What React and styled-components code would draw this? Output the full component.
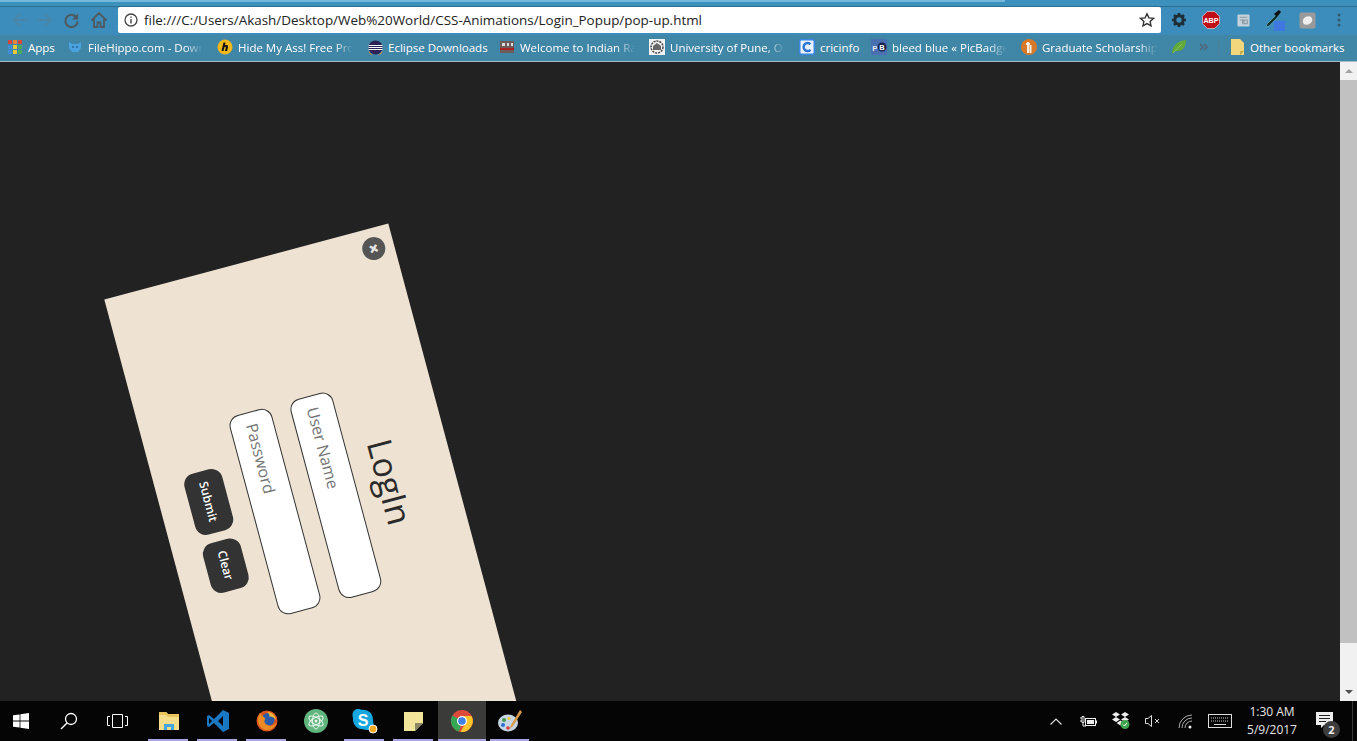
import styled, { createGlobalStyle } from 'styled-components';

const GlobalStyle = createGlobalStyle`
  html, body {
    margin: 0;
    padding: 0;
    height: 100%;
    overflow: hidden;
    font-family: "Open Sans", "Liberation Sans", sans-serif;
  }
  #root { height: 100%; }
`;

const Screen = styled.div`
  height: 100vh;
  display: flex;
  flex-direction: column;
`;

const TabStrip = styled.div`
  height: 7px;
  flex: none;
  box-sizing: border-box;
  background: #3b90bc;
  border-bottom: 1px solid #2c6f90;
  &::before {
    content: '';
    display: block;
    width: 1005px;
    height: 2px;
    background: #74b9dc;
  }
`;

const Toolbar = styled.div`
  height: 28px;
  flex: none;
  display: flex;
  align-items: flex-start;
  background: #3c8dbc;
  padding-left: 8px;
`;

const NavButton = styled.button`
  width: ${(props) => props.$width}px;
  height: 26px;
  flex: none;
  padding: 0;
  border: 0;
  background: none;
  display: flex;
  align-items: center;
  justify-content: center;
`;

const AddressBar = styled.div`
  flex: none;
  width: 1043px;
  height: 26px;
  margin-left: 8px;
  display: flex;
  align-items: center;
  background: #fff;
  border-radius: 2px;
  padding: 0 6px;
  box-sizing: border-box;
`;

const Url = styled.span`
  flex: 1;
  margin-left: 6px;
  font-size: 13.45px;
  color: #222;
  white-space: nowrap;
`;

const Extensions = styled.div`
  display: flex;
  margin-left: 2px;
`;

const ExtensionCell = styled.div`
  width: 32px;
  height: 26px;
  flex: none;
  display: flex;
  align-items: center;
  justify-content: center;
`;

const BookmarksBar = styled.div`
  height: 27px;
  flex: none;
  box-sizing: border-box;
  display: flex;
  align-items: center;
  background: #3f86a7;
  padding: 0 0 2px 7px;
  border-bottom: 1px solid #a7bcc6;
`;

const Bookmark = styled.div`
  width: ${(props) => props.$width}px;
  display: flex;
  align-items: center;
  gap: 5px;
  flex: none;
`;

const BookmarkIcon = styled.span`
  width: 16px;
  height: 16px;
  flex: none;
  display: flex;
  align-items: center;
  justify-content: center;
`;

const BookmarkLabel = styled.span`
  font-size: 11.5px;
  color: #fff;
  white-space: nowrap;
  ${(props) =>
    props.$fade &&
    `width: 115px;
     -webkit-mask-image: linear-gradient(to right, #000 84%, transparent 100%);
     mask-image: linear-gradient(to right, #000 84%, transparent 100%);`}
`;

const MoreIcon = styled.span`
  width: 19px;
  flex: none;
  display: flex;
  align-items: center;
`;

const Separator = styled.span`
  width: 1px;
  height: 16px;
  flex: none;
  background: #4a7f98;
  margin-right: 10px;
`;

const Viewport = styled.div`
  flex: 1;
  min-height: 0;
  display: flex;
`;

const Page = styled.main`
  flex: 1;
  position: relative;
  overflow: hidden;
  background: #222;
`;

const Popup = styled.section`
  position: absolute;
  left: 60.5px;
  top: 294px;
  width: 500px;
  height: 294px;
  padding-top: 43px;
  box-sizing: border-box;
  transform: rotate(75deg);
  background: #eee2d2;
  display: flex;
  flex-direction: column;
  align-items: center;
`;

const CloseButton = styled.button`
  position: absolute;
  left: 9px;
  top: 9px;
  width: 23px;
  height: 23px;
  padding: 0;
  border: 0;
  border-radius: 50%;
  background: #555;
  color: #e4e4e4;
  font: 800 18px/23px "Open Sans", sans-serif;
`;

const Title = styled.h2`
  margin: 0 0 12px;
  height: 44px;
  font-size: 34px;
  line-height: 44px;
  font-weight: 400;
  color: #2a2a2a;
`;

const Field = styled.input`
  width: 206px;
  height: 44px;
  flex: none;
  margin: 0 2px 19px 0;
  padding: 0 11px;
  box-sizing: border-box;
  border: 1px solid #333;
  border-radius: 11px;
  background: #fff;
  outline: none;
  font: 400 16px "Open Sans", sans-serif;
  &::placeholder { color: #757575; opacity: 1; }
`;

const Actions = styled.div`
  display: flex;
  gap: 9px;
  margin: 1px 0 0 4px;
`;

const ActionButton = styled.button`
  width: ${(props) => props.$width}px;
  height: 39px;
  padding: 0;
  border: 0;
  border-radius: 11px;
  background: #333;
  color: #fff;
  font: 600 12px "Open Sans", sans-serif;
`;

const Scrollbar = styled.div`
  width: 17px;
  flex: none;
  display: flex;
  flex-direction: column;
  background: #f1f1f1;
`;

const ScrollArrow = styled.div`
  height: 18px;
  flex: none;
  display: flex;
  align-items: center;
  justify-content: center;
  margin-top: ${(props) => (props.$down ? 'auto' : '0')};
  &::before {
    content: '';
    border-left: 4px solid transparent;
    border-right: 4px solid transparent;
    ${(props) => (props.$down ? 'border-top: 4px solid #505050;' : 'border-bottom: 4px solid #a3a3a3;')}
  }
`;

const ScrollThumb = styled.div`
  height: 563px;
  flex: none;
  background: #c1c1c1;
`;

const Taskbar = styled.footer`
  height: 40px;
  flex: none;
  display: flex;
  align-items: stretch;
  background: #050505;
  color: #fff;
`;

const TaskCell = styled.div`
  width: ${(props) => props.$width || 48}px;
  flex: none;
  box-sizing: border-box;
  padding-right: ${(props) => props.$inset || 0}px;
  display: flex;
  align-items: center;
  justify-content: center;
  background: ${(props) => (props.$active ? '#3b3b39' : 'transparent')};
  position: relative;
  &::after {
    content: '';
    display: ${(props) => (props.$open ? 'block' : 'none')};
    position: absolute;
    bottom: 0;
    left: ${(props) => (props.$active ? 0 : 4)}px;
    right: ${(props) => (props.$active ? 0 : 5)}px;
    height: 2px;
    background: #a9a6e2;
  }
`;

const Tray = styled.div`
  margin-left: auto;
  display: flex;
  align-items: center;
  padding-right: 4px;
`;

const TrayCell = styled.div`
  width: ${(props) => props.$width}px;
  height: 100%;
  flex: none;
  display: flex;
  align-items: center;
  justify-content: center;
`;

const Clock = styled.div`
  width: 66px;
  margin-left: 3px;
  flex: none;
  text-align: center;
  font-size: 12px;
  line-height: 18px;
  color: #e6e6e6;
`;

const Notes = styled.div`
  width: 48px;
  height: 100%;
  flex: none;
  position: relative;
  display: flex;
  align-items: center;
  justify-content: center;
  padding-right: 8px;
  padding-bottom: 2px;
  border-right: 1px solid #3a3a3a;
  box-sizing: border-box;
`;

const NoteBadge = styled.span`
  position: absolute;
  left: 18px;
  top: 20px;
  width: 17px;
  height: 17px;
  border-radius: 50%;
  background: #3d3d3d;
  color: #eee;
  font-size: 11px;
  font-weight: 700;
  line-height: 17px;
  text-align: center;
`;

const Back = ({ flip }) => (
  <svg width="18" height="16" viewBox="0 0 18 16" style={flip ? { transform: 'scaleX(-1)' } : undefined}>
    <path d="M8 2 2 8l6 6M2 8h14" fill="none" stroke="#4a86a8" strokeWidth="2" />
  </svg>
);

const Reload = () => (
  <svg width="17" height="17" viewBox="0 0 18 18">
    <path d="M14.500 6A6.500 6.500 0 1 0 15.500 10" fill="none" stroke="#4f5a60" strokeWidth="2.200" />
    <path d="M16 1.500V8h-6.500z" fill="#4f5a60" />
  </svg>
);

const Home = () => (
  <svg width="18" height="18" viewBox="0 0 18 18">
    <path d="M1.500 9.500 9 2l7.500 7.500M4 8v8h3.500v-4.500h3V16H14V8" fill="none" stroke="#4f5a60" strokeWidth="1.800" />
  </svg>
);

const Info = () => (
  <svg width="14" height="14" viewBox="0 0 14 14">
    <circle cx="7" cy="7" r="6" fill="none" stroke="#444" strokeWidth="1.300" />
    <path d="M6.300 6h1.400v4.500H6.300zM6.300 3.400h1.400v1.400H6.300z" fill="#444" />
  </svg>
);

const Star = () => (
  <svg width="16" height="16" viewBox="0 0 16 16">
    <path d="m8 1.800 1.900 4.100 4.500.5-3.300 3 .9 4.400L8 11.600l-4 2.200.9-4.400-3.300-3 4.500-.5z" fill="none" stroke="#333" strokeWidth="1.400" />
  </svg>
);

const Gear = () => (
  <svg width="16" height="16" viewBox="0 0 16 16">
    <circle cx="8" cy="8" r="4.200" fill="none" stroke="#1f2d36" strokeWidth="3" />
    <path d="M8 1v3M8 12v3M1 8h3M12 8h3M3 3l2 2M11 11l2 2M13 3l-2 2M5 11l-2 2" stroke="#1f2d36" strokeWidth="2.600" />
  </svg>
);

const Abp = () => (
  <svg width="18" height="18" viewBox="0 0 17 17">
    <path d="M5 .5h7L16.500 5v7L12 16.500H5L.5 12V5z" fill="#c00d18" stroke="#e8e8e8" strokeWidth=".6" />
    <text x="8.500" y="11" textAnchor="middle" fontSize="6.800" fontWeight="700" fill="#fff" fontFamily="Liberation Sans">ABP</text>
  </svg>
);

const Reader = () => (
  <svg width="13" height="13" viewBox="0 0 14 14">
    <rect x=".5" y=".5" width="13" height="13" rx="1" fill="#c4d2da" />
    <path d="M3 3.500h8M3 6.500h8v4H7.500v-4M3 6.500h3v4" fill="none" stroke="#87979f" strokeWidth="1.200" />
  </svg>
);

const Dropper = () => (
  <svg width="22" height="24" viewBox="0 0 22 24">
    <rect x="10" y="13" width="11" height="10" fill="#3f78e0" />
    <path d="m2 19 1-3 9-9 2 2-9 9z" fill="#133" stroke="#7cc" strokeWidth=".5" />
    <path d="m10 6 5-4 2 2-4 5z" fill="#111" />
  </svg>
);

const Shot = () => (
  <svg width="17" height="17" viewBox="0 0 17 17">
    <rect width="16" height="16" x=".5" y=".5" rx="2" fill="#9a9a9a" />
    <ellipse cx="8.500" cy="8.500" rx="5" ry="4" fill="#eee" transform="rotate(-30 8.500 8.500)" />
  </svg>
);

const Dots = () => (
  <svg width="4" height="14" viewBox="0 0 4 14">
    <circle cx="2" cy="2" r="1.500" fill="#35596c" />
    <circle cx="2" cy="7" r="1.500" fill="#35596c" />
    <circle cx="2" cy="12" r="1.500" fill="#35596c" />
  </svg>
);

const AppsGrid = () => (
  <svg width="14" height="14" viewBox="0 0 14 14">
    {[0, 1, 2].flatMap((r) =>
      [0, 1, 2].map((c) => (
        <rect
          key={`${r}${c}`}
          x={c * 5}
          y={r * 5}
          width="4"
          height="4"
          fill={[['#d8483a', '#e8833a', '#d8483a'], ['#3f8fd8', '#e8c83a', '#4aa860'], ['#3f8fd8', '#e8c83a', '#4aa860']][r][c]}
        />
      ))
    )}
  </svg>
);

const Hippo = () => (
  <svg width="14" height="12" viewBox="0 0 14 12">
    <path d="M1 1l3 2h6l3-2v6l-3 4H4L1 7z" fill="#4aa3e0" />
    <circle cx="5" cy="6" r="1" fill="#2a6a9a" />
    <circle cx="9" cy="6" r="1" fill="#2a6a9a" />
  </svg>
);

const HideMyAss = () => (
  <svg width="16" height="16" viewBox="0 0 16 16">
    <circle cx="8" cy="8" r="7.500" fill="#f2b91d" />
    <path d="M6.500 3.500h2L8 6.500c1.800-1 3.500-.3 3 1.500l-.9 4H8l.8-3.500c.2-1-1-1-1.500 0L6.500 12h-2z" fill="#111" />
  </svg>
);

const Eclipse = () => (
  <svg width="15" height="15" viewBox="0 0 15 15">
    <circle cx="7.500" cy="7.500" r="7" fill="#2c2255" />
    <path d="M.5 5.500h14M.5 7.500h14M.5 9.500h14" stroke="#fff" strokeWidth="1" />
    <path d="M1 11.500a7 7 0 0 0 13 0" fill="none" stroke="#e88a2a" strokeWidth="1" />
  </svg>
);

const Train = () => (
  <svg width="16" height="14" viewBox="0 0 16 14">
    <rect x="1" y="1" width="14" height="12" fill="#6e5a58" />
    <path d="M3 3h3v3H3zM8 3h2v3H8zM12 3h2v3h-2z" fill="#ddd" />
    <path d="M1 9h14" stroke="#a22" strokeWidth="2" />
  </svg>
);

const Pune = () => (
  <svg width="16" height="16" viewBox="0 0 16 16">
    <rect width="16" height="16" fill="#f2f2f2" />
    <circle cx="8" cy="8" r="6" fill="none" stroke="#444" strokeWidth="1.500" strokeDasharray="2 1" />
    <path d="M4 11V7l4-3 4 3v4z" fill="#666" />
  </svg>
);

const Cricinfo = () => (
  <svg width="16" height="16" viewBox="0 0 16 16">
    <rect width="16" height="16" rx="2" fill="#3a86e8" />
    <rect x="1.500" y="1.500" width="13" height="13" rx="1" fill="#e8f1fc" />
    <path d="M11.500 5.200A4 4 0 1 0 11.500 10.800" fill="none" stroke="#2a74d8" strokeWidth="2.400" />
  </svg>
);

const PicBadge = () => (
  <svg width="16" height="16" viewBox="0 0 16 16">
    <rect width="16" height="16" fill="#4a6fb0" />
    <text x="4" y="11.500" fontSize="8" fontWeight="700" fill="#dfe8f5" fontFamily="Liberation Sans" textAnchor="middle">P</text>
    <circle cx="11" cy="8" r="4.500" fill="#16264e" />
    <text x="11" y="11" fontSize="7.500" fontWeight="700" fill="#fff" fontFamily="Liberation Sans" textAnchor="middle">B</text>
  </svg>
);

const Gift = () => (
  <svg width="16" height="16" viewBox="0 0 16 16">
    <circle cx="8" cy="8" r="8" fill="#d8792a" />
    <path d="M7 3v11M9.500 6v8M5 5h4" stroke="#f6f0e4" strokeWidth="2" />
  </svg>
);

const Leaf = () => (
  <svg width="16" height="16" viewBox="0 0 16 16">
    <path d="M1 15C1 7 6 2 15 1c0 8-4 12-11 11z" fill="#62a83a" />
    <path d="M2 14 11 5" stroke="#8fca60" strokeWidth=".8" />
  </svg>
);

const More = () => (
  <svg width="9" height="8" viewBox="0 0 9 8">
    <path d="m1 1 3 3-3 3M5 1l3 3-3 3" fill="none" stroke="#50697a" strokeWidth="1.700" />
  </svg>
);

const Folder = () => (
  <svg width="13" height="16" viewBox="0 0 13 16">
    <path d="M0 0h9l4 4v12H0z" fill="#f2d77c" />
    <path d="M9 16l4-4H9z" fill="#c8a848" />
  </svg>
);

const WinLogo = () => (
  <svg width="16" height="16" viewBox="0 0 16 16">
    <path d="M0 2.300 6.600 1.400v6.200H0zM7.400 1.300 16 0v7.600H7.400zM0 8.400h6.600v6.200L0 13.700zM7.400 8.400H16V16l-8.600-1.300z" fill="#fff" />
  </svg>
);

const Search = () => (
  <svg width="18" height="18" viewBox="0 0 18 18">
    <circle cx="11" cy="7" r="5.500" fill="none" stroke="#fff" strokeWidth="1.300" />
    <path d="M7 11 1 17" stroke="#fff" strokeWidth="1.500" />
  </svg>
);

const TaskView = () => (
  <svg width="21" height="14" viewBox="0 0 21 14">
    <path d="M5.500.5h10v13h-10zM3 2.500H.5v9H3M18 2.500h2.500v9H18" fill="none" stroke="#fff" />
  </svg>
);

const Explorer = () => (
  <svg width="22" height="20" viewBox="0 0 22 20">
    <path d="M1 1h7l2 2h11v16H1z" fill="#f5dd8a" />
    <path d="M1 1h7l2 2h11v3H10L8 4H1z" fill="#e9c45c" />
    <path d="M6 13h10v6H6z" fill="#45a5e0" />
    <path d="M9 16h4v3H9z" fill="#f5dd8a" />
  </svg>
);

const VSCode = () => (
  <svg width="24" height="24" viewBox="0 0 24 24">
    <path d="M17 1l6 3v16l-6 3-9-9-5 4-2-1V7l2-1 5 4z" fill="#1a78c2" />
    <path d="M17 7l-5 5 5 5zM3 9v6l3-3z" fill="#050505" />
  </svg>
);

const Firefox = () => (
  <svg width="22" height="22" viewBox="0 0 22 22">
    <circle cx="11" cy="11" r="10.500" fill="#d8541e" />
    <circle cx="12" cy="9.500" r="6.500" fill="#2a5aa8" />
    <path d="M4 3C0 9 2 17 8 19.500c5 2 11-1 12.500-7-2 3-6 4-9 2.500-3-1.500-4-4-2-6.500C8 7 6 6 4 3z" fill="#ee8a24" />
    <path d="M11 2c5 0 8.500 3.500 9 8-2-2.500-4-4-7-3.500 1-1.500 0-3-2-4.500z" fill="#f2b93a" />
  </svg>
);

const Atom = () => (
  <svg width="24" height="24" viewBox="0 0 24 24">
    <circle cx="12" cy="12" r="12" fill="#5fb57d" />
    <g fill="none" stroke="#e8f6ec" strokeWidth="1">
      <ellipse cx="12" cy="12" rx="3.500" ry="8" />
      <ellipse cx="12" cy="12" rx="3.500" ry="8" transform="rotate(60 12 12)" />
      <ellipse cx="12" cy="12" rx="3.500" ry="8" transform="rotate(-60 12 12)" />
    </g>
    <circle cx="12" cy="12" r="1.500" fill="#e8f6ec" />
  </svg>
);

const Skype = () => (
  <svg width="26" height="26" viewBox="0 0 26 26">
    <path d="M6 1c2 0 3 .8 5 .8C17 1.800 21 6 21 12c0 1.500.5 2.500.5 4 0 3-2.500 6-6 6-2 0-3-.8-5-.8C5 21.200 1 17 1 11 1 9.500.5 8.500.5 7 .5 3.500 3 1 6 1z" fill="#17a7e0" />
    <text x="11" y="17.500" textAnchor="middle" fontSize="16" fontWeight="700" fill="#fff" fontFamily="Liberation Sans">S</text>
    <circle cx="21" cy="21" r="4" fill="#f5a623" stroke="#fff" />
  </svg>
);

const Sticky = () => (
  <svg width="19" height="19" viewBox="0 0 19 19">
    <path d="M0 0h19v11l-8 8H0z" fill="#f2e59a" />
    <path d="M11 19v-8h8z" fill="#8d8763" />
  </svg>
);

const Chrome = () => (
  <svg width="22" height="22" viewBox="0 0 22 22">
    <circle cx="11" cy="11" r="11" fill="#e04a3a" />
    <path d="M11 11 1.500 5.500A11 11 0 0 0 8 21.600z" fill="#36a853" />
    <path d="M11 6h9.500a11 11 0 0 1-11 16L15 12z" fill="#fbc62c" />
    <circle cx="11" cy="11" r="5" fill="#fff" />
    <circle cx="11" cy="11" r="3.800" fill="#3f7fe8" />
  </svg>
);

const Palette = () => (
  <svg width="24" height="24" viewBox="0 0 24 24">
    <ellipse cx="10" cy="14" rx="10" ry="8.500" fill="#c7d6e2" />
    <circle cx="6" cy="11" r="2" fill="#3f9a4a" />
    <circle cx="5" cy="16" r="2" fill="#2f6fd0" />
    <circle cx="10" cy="19" r="1.800" fill="#d83a3a" />
    <circle cx="11" cy="9.500" r="1.600" fill="#e8c83a" />
    <path d="M22 1 13 16l-1 4 3-3L24 3z" fill="#d89a4a" />
  </svg>
);

const Chevron = () => (
  <svg width="12" height="7" viewBox="0 0 12 7">
    <path d="M.5 6.500 6 1l5.500 5.500" fill="none" stroke="#ddd" strokeWidth="1.200" />
  </svg>
);

const Battery = () => (
  <svg width="17" height="11" viewBox="0 0 17 11">
    <path d="M0 2h2M0 5h2M2 .5h2v6H2zM3 6.500V10h3" fill="none" stroke="#eee" />
    <rect x="5.500" y="2.500" width="10" height="7" fill="none" stroke="#eee" />
    <rect x="7" y="4" width="7" height="4" fill="#eee" />
    <rect x="16" y="4.500" width="1" height="3" fill="#eee" />
  </svg>
);

const Dropbox = () => (
  <svg width="19" height="18" viewBox="0 0 19 18">
    <path d="m4 0 4 2.500L4 5 0 2.500zM13 0l4 2.500L13 5 9 2.500zM4 5l4 2.500L4 10 0 7.500zM13 5l4 2.500L13 10 9 7.500zM8.500 8.500l4 2.500-4 2.500-4-2.500z" fill="#eee" />
    <circle cx="13" cy="12.500" r="4.500" fill="#3fa34d" />
    <path d="m11 12.500 1.500 1.500 2.500-3" fill="none" stroke="#fff" />
  </svg>
);

const Muted = () => (
  <svg width="16" height="12" viewBox="0 0 16 12">
    <path d="M.5 3.500h2.500L6.500.5v11L3 8.500H.5z" fill="none" stroke="#ddd" />
    <path d="m10 4 4 4M14 4l-4 4" stroke="#ddd" />
  </svg>
);

const Wifi = () => (
  <svg width="15" height="15" viewBox="0 0 15 15">
    <path d="M1 14A13 13 0 0 1 14 1M4 14A10 10 0 0 1 14 4M7 14a7 7 0 0 1 7-7" fill="none" stroke="#aaa" strokeWidth="1" />
    <circle cx="12" cy="13" r="1.500" fill="#eee" />
  </svg>
);

const Keyboard = () => (
  <svg width="24" height="14" viewBox="0 0 24 14">
    <rect x=".5" y=".5" width="23" height="13" fill="none" stroke="#ddd" />
    <path d="M3 4h18M3 7h18" stroke="#ccc" strokeDasharray="1 1" />
    <path d="M6 10.500h12" stroke="#ddd" />
  </svg>
);

const Note = () => (
  <svg width="17" height="16" viewBox="0 0 17 16">
    <path d="M0 0h17v13H8l-3 3v-3H0z" fill="#eee" />
    <path d="M3 3.500h11M3 6.500h11M3 9.500h7" stroke="#222" />
  </svg>
);

const bookmarks = [
  { icon: <AppsGrid />, label: 'Apps', width: 60 },
  { icon: <Hippo />, label: 'FileHippo.com - Down', width: 150, fade: true },
  { icon: <HideMyAss />, label: 'Hide My Ass! Free Pro', width: 150, fade: true },
  { icon: <Eclipse />, label: 'Eclipse Downloads', width: 132 },
  { icon: <Train />, label: 'Welcome to Indian Ra', width: 150, fade: true },
  { icon: <Pune />, label: 'University of Pune, Or', width: 150, fade: true },
  { icon: <Cricinfo />, label: 'cricinfo', width: 72 },
  { icon: <PicBadge />, label: 'bleed blue « PicBadge', width: 150, fade: true },
  { icon: <Gift />, label: 'Graduate Scholarship', width: 150, fade: true }
];

const running = [
  { icon: <Explorer />, open: true, width: 49 },
  { icon: <VSCode />, open: true, width: 49 },
  { icon: <Firefox />, open: true, width: 49 },
  { icon: <Atom />, width: 49 },
  { icon: <Skype />, open: true, width: 49 },
  { icon: <Sticky />, open: true, width: 49 },
  { icon: <Chrome />, open: true, active: true, width: 48 },
  { icon: <Palette />, open: true, width: 48 }
];

const extensions = [<Gear />, <Abp />, <Reader />, <Dropper />, <Shot />, <Dots />];

export default function App() {
  return (
    <Screen>
      <GlobalStyle />
      <TabStrip />
      <Toolbar>
        <NavButton $width={26}><Back /></NavButton>
        <NavButton $width={20}><Back flip /></NavButton>
        <NavButton $width={34}><Reload /></NavButton>
        <NavButton $width={22}><Home /></NavButton>
        <AddressBar>
          <Info />
          <Url>file:///C:/Users/Akash/Desktop/Web%20World/CSS-Animations/Login_Popup/pop-up.html</Url>
          <Star />
        </AddressBar>
        <Extensions>
          {extensions.map((icon, i) => (
            <ExtensionCell key={i}>{icon}</ExtensionCell>
          ))}
        </Extensions>
      </Toolbar>
      <BookmarksBar>
        {bookmarks.map((b) => (
          <Bookmark key={b.label} $width={b.width}>
            <BookmarkIcon>{b.icon}</BookmarkIcon>
            <BookmarkLabel $fade={b.fade}>{b.label}</BookmarkLabel>
          </Bookmark>
        ))}
        <Bookmark $width={28}>
          <BookmarkIcon><Leaf /></BookmarkIcon>
        </Bookmark>
        <MoreIcon><More /></MoreIcon>
        <Separator />
        <Bookmark $width={120}>
          <BookmarkIcon><Folder /></BookmarkIcon>
          <BookmarkLabel>Other bookmarks</BookmarkLabel>
        </Bookmark>
      </BookmarksBar>
      <Viewport>
        <Page>
          <Popup>
            <CloseButton>×</CloseButton>
            <Title>LogIn</Title>
            <Field placeholder="User Name" readOnly />
            <Field placeholder="Password" readOnly />
            <Actions>
              <ActionButton $width={63}>Submit</ActionButton>
              <ActionButton $width={51}>Clear</ActionButton>
            </Actions>
          </Popup>
        </Page>
        <Scrollbar>
          <ScrollArrow />
          <ScrollThumb />
          <ScrollArrow $down />
        </Scrollbar>
      </Viewport>
      <Taskbar>
        <TaskCell $width={45} $inset={3}><WinLogo /></TaskCell>
        <TaskCell><Search /></TaskCell>
        <TaskCell><TaskView /></TaskCell>
        <TaskCell $width={3} />
        {running.map((r, i) => (
          <TaskCell key={i} $width={r.width} $open={r.open} $active={r.active}>{r.icon}</TaskCell>
        ))}
        <Tray>
          <TrayCell $width={33}><Chevron /></TrayCell>
          <TrayCell $width={33}><Battery /></TrayCell>
          <TrayCell $width={33}><Dropbox /></TrayCell>
          <TrayCell $width={30}><Muted /></TrayCell>
          <TrayCell $width={35}><Wifi /></TrayCell>
          <TrayCell $width={33}><Keyboard /></TrayCell>
          <Clock>1:30 AM<br />5/9/2017</Clock>
          <Notes>
            <Note />
            <NoteBadge>2</NoteBadge>
          </Notes>
        </Tray>
      </Taskbar>
    </Screen>
  );
}
